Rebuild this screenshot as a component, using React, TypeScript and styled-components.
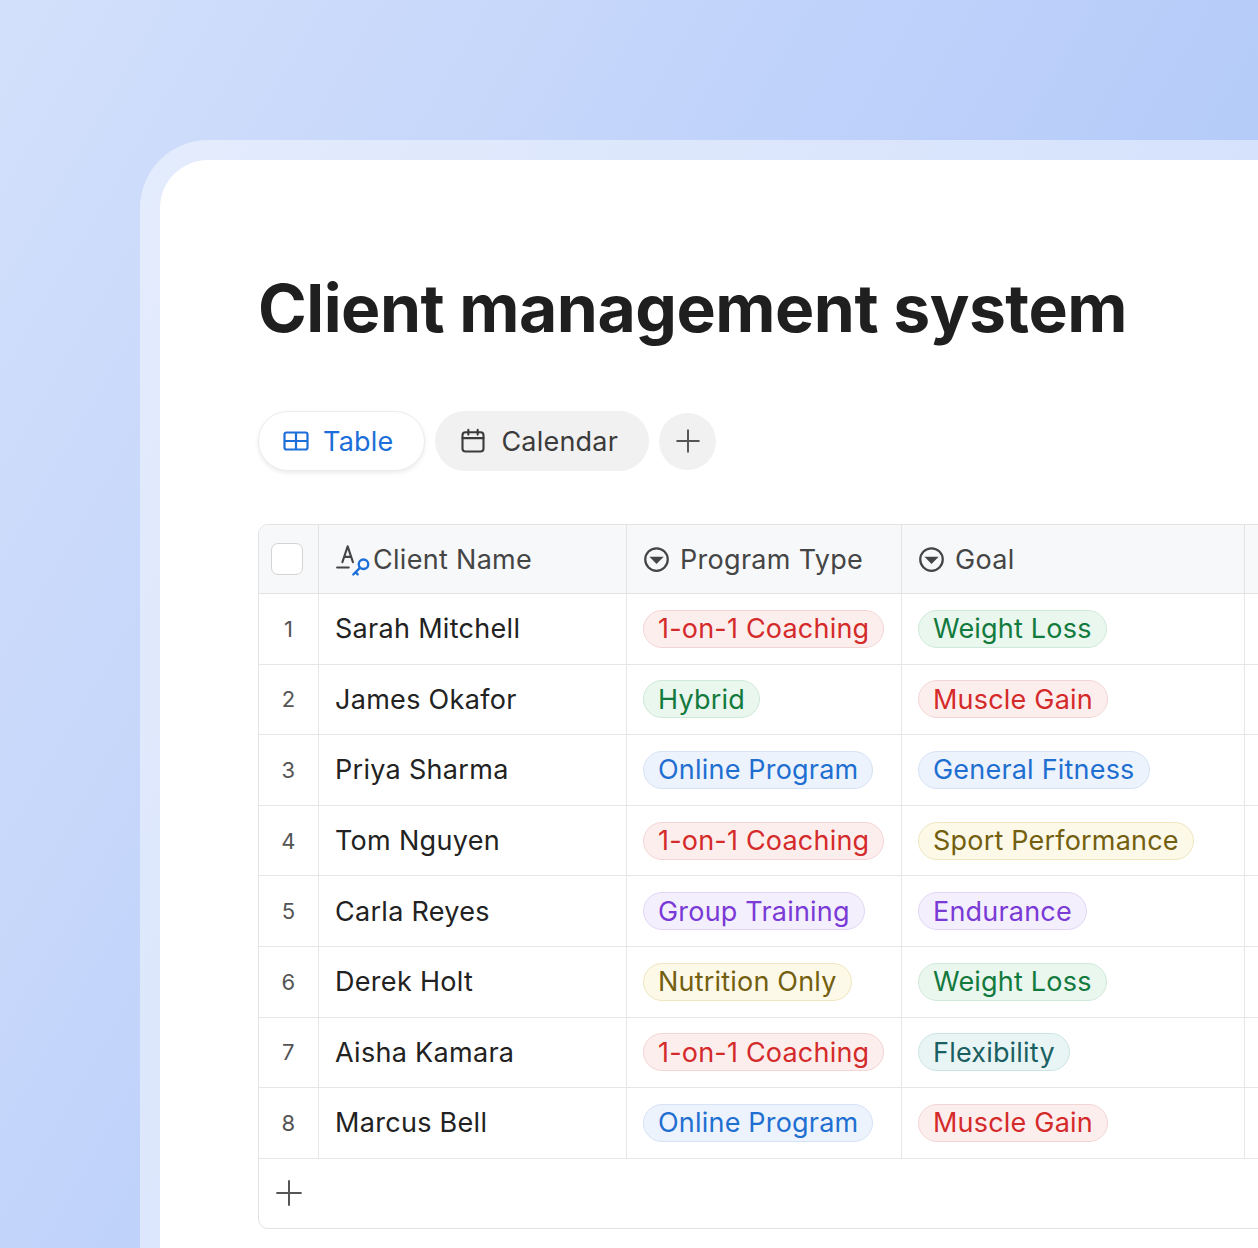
import React from "react";
import styled, { createGlobalStyle } from "styled-components";

const Global = createGlobalStyle`
  html, body { margin: 0; padding: 0; overflow: hidden; }
  body { font-family: Inter, "Noto Sans", sans-serif; width: 1258px; height: 1248px; }
`;

const Page = styled.div`
  width: 1258px; height: 1248px; overflow: hidden;
  background: linear-gradient(120deg, #d3e0fb 0%, #bcd0fa 50%, #a9c2f6 100%);
  padding: 140px 0 0 140px; box-sizing: border-box;
`;
const Frame = styled.div`
  width: 1300px; height: 1200px; box-sizing: border-box;
  padding: 20px 0 0 20px; border-top-left-radius: 68px;
  background: rgba(255,255,255,0.45);
`;
const Card = styled.div`
  background: #fff; height: 100%; border-top-left-radius: 48px;
  padding: 108px 0 0 98px; box-sizing: border-box;
`;
const Title = styled.h1`
  margin: 0; font-size: 66px; font-weight: 700; color: #1f1f1f; letter-spacing: -0.5px; line-height: 80px;
`;
const Tabs = styled.div`display: flex; gap: 10px; margin-top: 63px; align-items: center;`;
const Tab = styled.div<{ $active?: boolean }>`
  height: 60px; box-sizing: border-box; display: flex; align-items: center; gap: 14px;
  padding: 0 31px 0 24px; border-radius: 30px; font-size: 27px; letter-spacing: 0.2px;
  background: ${p => (p.$active ? "#fff" : "#f1f1f1")};
  color: ${p => (p.$active ? "#1c6fd8" : "#3b3b3b")};
  border: ${p => (p.$active ? "1px solid #ececec" : "none")};
  box-shadow: ${p => (p.$active ? "0 2px 4px rgba(0,0,0,0.08)" : "none")};
`;
const PlusTab = styled.div`
  width: 57px; height: 57px; border-radius: 50%; background: #f1f1f1;
  display: flex; align-items: center; justify-content: center;
`;
const Table = styled.div`
  margin-top: 53px; width: 1100px; border: 1px solid #e3e3e3; border-radius: 10px;
  overflow: hidden; display: grid; grid-template-columns: 60px 308px 275px 343px 112px;
`;
const HeadCell = styled.div`
  height: 68px; background: #f7f8fa; border-bottom: 1px solid #e3e3e3; border-right: 1px solid #e3e3e3;
  display: flex; align-items: center; gap: 10px; padding-left: 16px; font-size: 27px; color: #454545;
  letter-spacing: 0.3px;
`;
const Cell = styled.div<{ $num?: boolean }>`
  height: 69.6px; border-bottom: 1px solid #e6e6e6; border-right: 1px solid #e6e6e6;
  display: flex; align-items: center; padding-left: ${p => (p.$num ? "0" : "16px")};
  justify-content: ${p => (p.$num ? "center" : "flex-start")};
  font-size: ${p => (p.$num ? "22px" : "27px")}; color: ${p => (p.$num ? "#555" : "#222")};
  letter-spacing: 0.3px;
`;
const AddRow = styled.div`
  grid-column: 1 / -1; height: 69px; display: flex; align-items: center; padding-left: 17px;
`;
const Check = styled.div`
  width: 30px; height: 30px; border: 1.5px solid #d4d4d4; border-radius: 7px; background: #fff; margin-left: -2px;
`;
const Pill = styled.span<{ $c: string }>`
  display: inline-flex; align-items: center; height: 38px; box-sizing: border-box; padding: 0 14px;
  border-radius: 19px; font-size: 27px; letter-spacing: 0.2px;
  ${p => {
    const m: Record<string, [string, string, string]> = {
      red: ["#fdeeee", "#f3d5d5", "#d42a2a"],
      green: ["#eaf7ef", "#cfe9d8", "#137a3e"],
      blue: ["#edf3fd", "#d6e2f5", "#1f6fd1"],
      yellow: ["#fdf9e8", "#efe6bf", "#735f10"],
      purple: ["#f4effd", "#e1d6f5", "#7a3ad6"],
      teal: ["#e9f5f5", "#cde4e4", "#1a5f62"],
    };
    const [bg, bd, fg] = m[p.$c];
    return `background:${bg};border:1.5px solid ${bd};color:${fg};`;
  }}
`;

const SelectIcon = () => (
  <svg width="27" height="27" viewBox="0 0 24 24" fill="none" stroke="#454545" strokeWidth="2">
    <circle cx="12" cy="12" r="10" />
    <path d="M8 10.5l4 4 4-4z" fill="#454545" />
  </svg>
);

const rows: [string, string, string, string, string][] = [
  ["Sarah Mitchell", "1-on-1 Coaching", "red", "Weight Loss", "green"],
  ["James Okafor", "Hybrid", "green", "Muscle Gain", "red"],
  ["Priya Sharma", "Online Program", "blue", "General Fitness", "blue"],
  ["Tom Nguyen", "1-on-1 Coaching", "red", "Sport Performance", "yellow"],
  ["Carla Reyes", "Group Training", "purple", "Endurance", "purple"],
  ["Derek Holt", "Nutrition Only", "yellow", "Weight Loss", "green"],
  ["Aisha Kamara", "1-on-1 Coaching", "red", "Flexibility", "teal"],
  ["Marcus Bell", "Online Program", "blue", "Muscle Gain", "red"],
];

export default function App() {
  return (
    <Page>
      <Global />
      <Frame>
        <Card>
          <Title>Client management system</Title>
          <Tabs>
            <Tab $active>
              <svg width="26" height="20" viewBox="0 0 26 20" fill="none" stroke="#1c6fd8" strokeWidth="2.2">
                <rect x="1.5" y="1.5" width="23" height="17" rx="2" />
                <path d="M1.5 10h23M13 1.5v17" />
              </svg>
              Table
            </Tab>
            <Tab>
              <svg width="28" height="28" viewBox="0 0 24 24" fill="none" stroke="#3b3b3b" strokeWidth="1.8" strokeLinecap="round">
                <rect x="3" y="4.5" width="18" height="16.5" rx="2.5" />
                <path d="M3 9.5h18M8 2.5v4M16 2.5v4" />
              </svg>
              Calendar
            </Tab>
            <PlusTab>
              <svg width="26" height="26" viewBox="0 0 24 24" stroke="#555" strokeWidth="1.8" strokeLinecap="round">
                <path d="M12 2v20M2 12h20" />
              </svg>
            </PlusTab>
          </Tabs>
          <Table>
            <HeadCell style={{ paddingLeft: 14 }}><Check /></HeadCell>
            <HeadCell style={{ gap: 0 }}>
              <svg width="38" height="38" viewBox="0 0 36 36" fill="none" strokeLinecap="round" strokeLinejoin="round">
                <path d="M7 21L12 6l5 15M9 16h6" stroke="#454545" strokeWidth="2" />
                <path d="M2 26h11" stroke="#454545" strokeWidth="2" />
                <circle cx="27" cy="23" r="4.5" stroke="#1c6fd8" strokeWidth="2.2" />
                <path d="M23.8 26.2l-6.5 6.5M19.5 30.5l2 2" stroke="#1c6fd8" strokeWidth="2.2" />
              </svg>
              Client Name
            </HeadCell>
            <HeadCell><SelectIcon />Program Type</HeadCell>
            <HeadCell><SelectIcon />Goal</HeadCell>
            <HeadCell />
            {rows.map((r, i) => (
              <React.Fragment key={i}>
                <Cell $num>{i + 1}</Cell>
                <Cell>{r[0]}</Cell>
                <Cell><Pill $c={r[2]}>{r[1]}</Pill></Cell>
                <Cell><Pill $c={r[4]}>{r[3]}</Pill></Cell>
                <Cell />
              </React.Fragment>
            ))}
            <AddRow>
              <svg width="26" height="26" viewBox="0 0 24 24" stroke="#555" strokeWidth="1.8" strokeLinecap="round">
                <path d="M12 1v22M1 12h22" />
              </svg>
            </AddRow>
          </Table>
        </Card>
      </Frame>
    </Page>
  );
}
